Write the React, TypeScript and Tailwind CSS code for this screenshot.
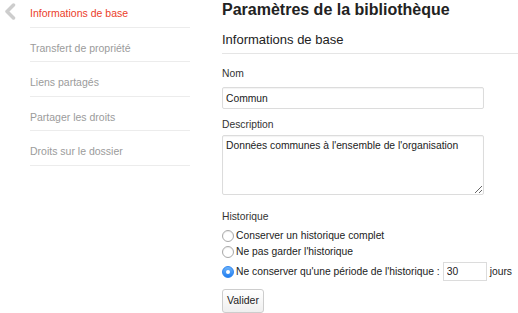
const navItems = [
  'Informations de base',
  'Transfert de propriété',
  'Liens partagés',
  'Partager les droits',
  'Droits sur le dossier',
];

function Radio({ checked }: { checked?: boolean }) {
  if (checked) {
    return (
      <span className="flex size-[12px] shrink-0 items-center justify-center rounded-full border border-[#2f86f0] bg-gradient-to-b from-[#6cb3fa] to-[#1e7ef0]">
        <span className="size-[4px] rounded-full bg-white" />
      </span>
    );
  }
  return <span className="size-[12px] shrink-0 rounded-full border border-[#a9a9a9] bg-white shadow-[inset_0_1px_1px_rgba(0,0,0,0.08)]" />;
}

export default function App() {
  return (
    <div
      className="flex h-[313px] w-[518px] overflow-hidden bg-white text-[#333]"
      style={{ fontFamily: '"Liberation Sans", Arial, sans-serif' }}
    >
      {/* Back chevron */}
      <div className="w-[30px] shrink-0 pl-[4px] pt-[3px]">
        <svg width="12" height="17" viewBox="0 0 12 17" aria-hidden="true">
          <polyline points="9.5,2 3,8.5 9.5,15" fill="none" stroke="#cdcdcd" strokeWidth="3.5" strokeLinecap="round" strokeLinejoin="round" />
        </svg>
      </div>

      {/* Sidebar nav */}
      <nav className="mt-[-7px] w-[160px] shrink-0">
        {navItems.map((item, i) => (
          <div
            key={item}
            className={`h-[34.5px] border-b border-[#ececec] pt-[13px] text-[10.5px] leading-[14px] ${
              i === 0 ? 'text-[#eb402a]' : 'text-[#9b9b9b]'
            }`}
          >
            {item}
          </div>
        ))}
      </nav>

      {/* Main */}
      <main className="ml-[32px] flex-1">
        <h1 className="text-[16px] font-bold leading-[20px] text-[#222]">Paramètres de la bibliothèque</h1>
        <h2 className="mt-[12px] border-b border-[#e5e5e5] pb-[5px] text-[13px] leading-[16px] text-[#222]">
          Informations de base
        </h2>

        <div className="mt-[13px] text-[10.3px] leading-[14px]">Nom</div>
        <input
          readOnly
          defaultValue="Commun"
          className="mt-[6px] block h-[22px] w-[262px] rounded-[2px] border border-[#dcdcdc] px-[3px] text-[10.3px] text-[#222] shadow-[inset_0_1px_1px_rgba(0,0,0,0.05)] outline-none"
        />

        <div className="mt-[9px] text-[10.3px] leading-[14px]">Description</div>
        <textarea
          readOnly
          defaultValue="Données communes à l'ensemble de l'organisation"
          className="mt-[3px] block h-[60px] w-[262px] rounded-[2px] border border-[#dcdcdc] px-[3px] py-[3px] text-[10.3px] leading-[13px] text-[#222] shadow-[inset_0_1px_1px_rgba(0,0,0,0.05)] outline-none"
        />

        <div className="mt-[15px] text-[10.3px] leading-[14px]">Historique</div>
        <div className="mt-[5px] flex h-[14px] items-center gap-[2px] text-[10.3px] text-[#222]">
          <Radio />
          <span>Conserver un historique complet</span>
        </div>
        <div className="mt-[2px] flex h-[14px] items-center gap-[2px] text-[10.3px] text-[#222]">
          <Radio />
          <span>Ne pas garder l'historique</span>
        </div>
        <div className="mt-[3px] flex h-[19px] items-center text-[10.3px] text-[#222]">
          <Radio checked />
          <span className="ml-[2px]">Ne conserver qu'une période de l'historique :</span>
          <input
            readOnly
            defaultValue="30"
            className="ml-[3px] block h-[19px] w-[44px] border border-[#dcdcdc] px-[3px] text-[10.3px] text-[#222] outline-none"
          />
          <span className="ml-[3px]">jours</span>
        </div>

        <button
          type="button"
          className="mt-[8px] h-[24px] w-[42px] rounded-[3px] border border-[#cdcdcd] bg-gradient-to-b from-white to-[#efefef] text-[10.5px] text-[#222]"
        >
          Valider
        </button>
      </main>
    </div>
  );
}
